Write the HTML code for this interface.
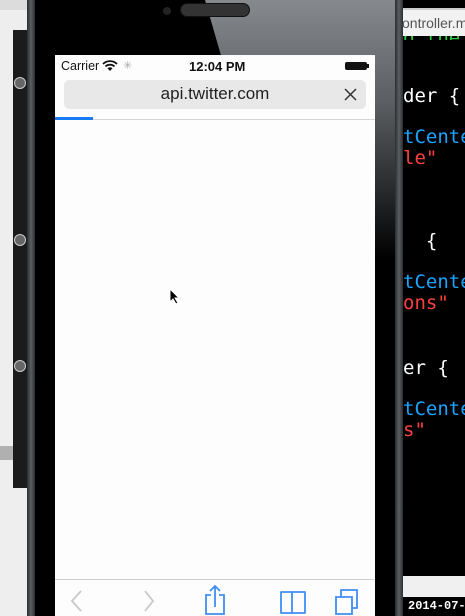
<!DOCTYPE html>
<html><head><meta charset="utf-8"><style>
*{margin:0;padding:0;box-sizing:border-box}
html,body{width:465px;height:616px;overflow:hidden}
body{position:relative;background:#000;font-family:"Liberation Sans",sans-serif}
.a{position:absolute;white-space:nowrap}
.code{position:absolute;left:403px;font-family:"DejaVu Sans Mono","Liberation Mono",monospace;font-size:19px;white-space:pre;line-height:20px}
</style></head><body>
<div class="a" style="left:0;top:0;width:27px;height:616px;background:#eeeeee"></div>
<div class="a" style="left:0;top:0;width:27px;height:10px;background:#dcdcdc"></div>
<div class="a" style="left:13px;top:30px;width:14px;height:458px;background:#1b1b1b"></div>
<div class="a" style="left:0;top:446px;width:13px;height:14px;background:#b0b0b0"></div>
<div class="a" style="left:14px;top:77px;width:12px;height:12px;border-radius:50%;border:1px solid #ccc;background:#666"></div>
<div class="a" style="left:14px;top:234px;width:12px;height:12px;border-radius:50%;border:1px solid #ccc;background:#666"></div>
<div class="a" style="left:14px;top:360px;width:12px;height:12px;border-radius:50%;border:1px solid #ccc;background:#666"></div>
<div class="a" style="left:27px;top:0;width:8px;height:616px;background:linear-gradient(90deg,#2a2d30,#5a5f63,#2a2d30)"></div>
<div class="a" style="left:395px;top:0;width:8px;height:616px;background:linear-gradient(90deg,#2a2d30,#5a5f63,#2a2d30)"></div>
<div class="a" style="left:35px;top:0;width:360px;height:616px;background:#000"></div>
<div class="a" style="left:35px;top:0;width:360px;height:260px;background:linear-gradient(180deg,#86898d,#5a5d61 40%,#000 100%);clip-path:polygon(170px 0,360px 0,360px 260px,245px 260px)"></div>
<div class="a" style="left:163px;top:7px;width:8px;height:8px;border-radius:50%;background:#222"></div>
<div class="a" style="left:180px;top:3px;width:70px;height:14px;border-radius:7px;background:#333;border:1px solid #111"></div>
<div class="a" style="left:55px;top:55px;width:320px;height:561px;background:#fdfdfd"></div>
<div class="a" style="left:61px;top:59px;font-size:12.5px;color:#111">Carrier</div>
<svg class="a" style="left:102px;top:60px" width="16" height="11" viewBox="0 0 16 11"><path d="M1 4 A10 10 0 0 1 15 4 M3.5 6.5 A6.5 6.5 0 0 1 12.5 6.5" stroke="#111" stroke-width="1.8" fill="none"/><path d="M5.5 8.3 L8 11 L10.5 8.3 A3.5 3.5 0 0 0 5.5 8.3Z" fill="#111"/></svg>
<div class="a" style="left:123px;top:59px;font-size:11px;color:#aaa">✳</div>
<div class="a" style="left:189px;top:59px;font-size:13px;font-weight:bold;color:#111">12:04 PM</div>
<div class="a" style="left:345px;top:62px;width:22px;height:8px;background:#111;border-radius:2px"></div>
<div class="a" style="left:367px;top:64px;width:2px;height:4px;background:#111"></div>
<div class="a" style="left:64px;top:80px;width:302px;height:29px;background:#e8e8e8;border-radius:5px"></div>
<div class="a" style="left:64px;top:84px;width:302px;text-align:center;font-size:17px;color:#222">api.twitter.com</div>
<svg class="a" style="left:344px;top:88px" width="13" height="13"><path d="M1 1L12 12M12 1L1 12" stroke="#333" stroke-width="1.5"/></svg>
<div class="a" style="left:55px;top:119px;width:320px;height:1px;background:#d6d6d6"></div>
<div class="a" style="left:55px;top:117px;width:38px;height:3px;background:#1a7cf5"></div>
<div class="a" style="left:55px;top:579px;width:320px;height:1px;background:#d0d0d0"></div>
<svg class="a" style="left:55px;top:580px" width="320" height="36">
<path d="M26 11L17 21L26 31" stroke="#c8c8c8" stroke-width="1.8" fill="none"/>
<path d="M90 11L98 21L90 31" stroke="#c8c8c8" stroke-width="1.8" fill="none"/>
<g stroke="#3f8ef5" stroke-width="1.8" fill="none">
<path d="M156 15H151V34H169V15H164M160 27V6M155 11L160 6L165 11"/>
<path d="M226 12H237V33H226ZM237 12H250V33H237Z" stroke-linejoin="round"/>
<path d="M281 17H297V34H281ZM286 17V10H302V28H297"/>
</g></svg>
<svg class="a" style="left:169px;top:288px" width="12" height="17"><path d="M1 1V14L4 11L7 16L9 15L6 10H10Z" fill="#000" stroke="#fff" stroke-width="1"/></svg>
<div class="a" style="left:403px;top:0;width:62px;height:616px;background:#000"></div>
<div class="code" style="top:28px;color:#2ecc40;height:12px;overflow:hidden">o the</div>
<div class="a" style="left:403px;top:8px;width:62px;height:28px;background:#f2f2f2;border-top:2px solid #ccc"></div>
<div class="a" style="left:402px;top:15px;font-size:14px;color:#555">ontroller.m</div>
<div class="code" style="top:86px;color:#fff">der {</div>
<div class="code" style="top:127px;color:#1aa3ff">tCente</div>
<div class="code" style="top:148px;color:#ff4040">le"</div>
<div class="code" style="top:231px;color:#fff">  {</div>
<div class="code" style="top:272px;color:#1aa3ff">tCente</div>
<div class="code" style="top:293px;color:#ff4040">ons"</div>
<div class="code" style="top:358px;color:#fff">er {</div>
<div class="code" style="top:399px;color:#1aa3ff">tCente</div>
<div class="code" style="top:420px;color:#ff4040">s"</div>
<div class="a" style="left:403px;top:576px;width:62px;height:21px;background:#f0f0f0"></div>
<div class="a" style="left:408px;top:599px;font-family:'Liberation Mono',monospace;font-size:12px;font-weight:bold;color:#fff">2014-07-0</div>
</body></html>
